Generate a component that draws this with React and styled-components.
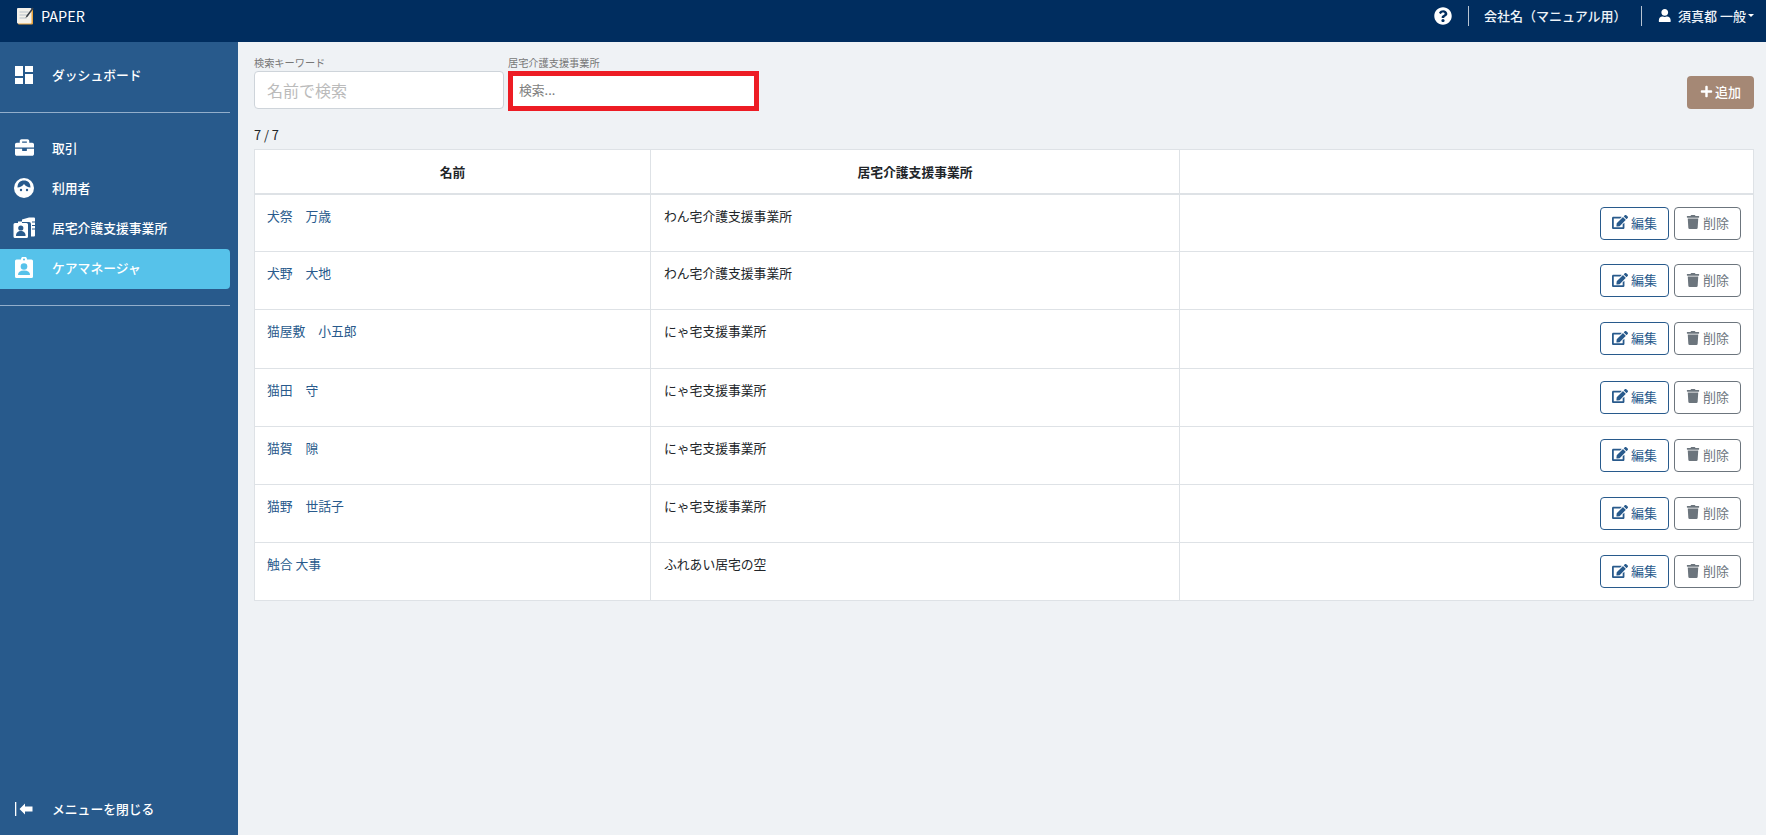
import React from 'react';
import styled, { createGlobalStyle } from 'styled-components';
import { FaBriefcase, FaQuestionCircle, FaUser, FaPlus, FaEdit, FaTrash } from 'react-icons/fa';
import { MdDashboard } from 'react-icons/md';

const Global = createGlobalStyle`
  html, body { margin: 0; padding: 0; height: 100%; background: #eff2f5; }
  #root { height: 100%; }
  * { box-sizing: border-box; }
  body { font-family: "Noto Sans CJK JP", "Noto Sans", sans-serif; color: #212529; }
`;
const Page = styled.div`display:flex;flex-direction:column;height:835px;overflow:hidden;`;
const Header = styled.header`height:42px;flex:none;background:#002d5f;color:#fff;display:flex;align-items:center;justify-content:space-between;padding:0 12px 11px 16px;`;
const Brand = styled.div`display:flex;align-items:center;gap:7px;font-size:14.4px;line-height:16px;`;
const HeaderRight = styled.div`display:flex;align-items:center;font-size:13px;font-weight:500;color:#eef3f8;`;
const HelpIcon = styled(FaQuestionCircle)`font-size:18px;color:#fff;margin-right:16px;`;
const Sep = styled.span`width:1px;height:20px;background:#b8c4d2;`;
const Company = styled.span`margin:0 14px 0 15px;`;
const UserIcon = styled(FaUser)`font-size:13.5px;margin:0 7px 0 16px;color:#fff;`;
const Caret = styled.span`margin-left:2px;border-top:3px solid #fff;border-left:3px solid transparent;border-right:3px solid transparent;`;
const Body = styled.div`flex:1;display:flex;min-height:0;`;
const Sidebar = styled.nav`width:238px;flex:none;background:#285a8c;display:flex;flex-direction:column;padding:14px 8px 5px 0;`;
const NavItem = styled.div`height:40px;flex:none;display:flex;align-items:center;padding:0 0 3px 12px;color:#fff;font-size:12.8px;font-weight:500;border-radius:0 4px 4px 0;background:${p => (p.$active ? '#56c2ea' : 'transparent')};`;
const IconBox = styled.span`width:24px;height:24px;font-size:19px;margin-right:16px;display:flex;align-items:center;justify-content:center;color:#fff;`;
const Rule = styled.div`height:1px;flex:none;background:#93aecb;margin:${p => p.$m};`;
const Spacer = styled.div`flex:1;`;
const Main = styled.main`flex:1;min-width:0;padding:14px 12px 0 16px;`;
const Filters = styled.div`display:flex;align-items:flex-start;height:55px;`;
const Field = styled.div`display:flex;flex-direction:column;margin-right:4px;`;
const Label = styled.label`font-size:10.2px;line-height:13px;height:15px;color:#777;`;
const NameInput = styled.div`width:250px;height:38px;background:#fff;border:1px solid #ced4da;border-radius:4px;padding:0 12px;display:flex;align-items:center;font-size:16px;color:#bbb;`;
const SelectInput = styled.div`width:251px;height:40px;background:#fff;border:5px solid #ed1c24;padding:0 6px 3px;display:flex;align-items:center;font-size:12.8px;color:#808080;`;
const AddButton = styled.button`margin:20px 0 0 auto;width:67px;height:33px;background:#a58875;color:#fff;border:0;border-radius:4px;font:500 13px "Noto Sans CJK JP",sans-serif;display:flex;align-items:center;justify-content:center;gap:2px;padding:0 0 2px;`;
const Count = styled.div`font-size:12.8px;line-height:16px;margin-top:16px;margin-bottom:6px;`;
const Table = styled.table`width:1500px;border-collapse:collapse;table-layout:fixed;background:#fff;font-size:12.8px;`;
const Th = styled.th`height:44px;border:1px solid #dee2e6;border-bottom:2px solid #dee2e6;font-weight:700;text-align:center;vertical-align:middle;`;
const Td = styled.td`height:58.2px;border:1px solid #dee2e6;padding:11px 12px 0 13px;vertical-align:top;line-height:19px;`;
const NameLink = styled.a`color:#285a8c;margin-left:-1px;`;
const Actions = styled.div`display:flex;justify-content:flex-end;gap:5px;margin-top:1px;`;
const RowButton = styled.button`height:33px;background:#fff;border-radius:4px;border:1px solid ${p => p.$c};color:${p => p.$c};font:400 13px "Noto Sans CJK JP",sans-serif;display:flex;align-items:center;justify-content:center;gap:3px;width:${p => p.$w}px;padding:0 0 2px;svg{font-size:${p => p.$icon}px;}`;

const Logo = () => (
  <svg width="18" height="18" viewBox="0 0 18 18">
    <rect x="2" y="2" width="15" height="15.5" rx="1" fill="#e8a33d" />
    <rect x="1" y="1" width="14.500" height="15.500" rx="1" fill="#f4f1ea" />
    <path d="M3.500 5h9M3.500 8h9M3.500 11h7" stroke="#b9c2c9" strokeWidth="1" />
    <path d="M16.500 0.500l-6 8-1 2.500 2.200-1.500 6-8z" fill="#3a3f45" />
  </svg>
);
const FaceIcon = () => (
  <svg width="20" height="20" viewBox="0 0 20 20">
    <circle cx="10" cy="10" r="10" fill="#fff" />
    <path d="M3.500 9.500C3.500 5 6 2.500 10 2.500s6.500 2.500 6.500 7C14 9.500 11.500 8 10 6 8.500 8 6 9.500 3.500 9.500z" fill="#285a8c" />
    <circle cx="7" cy="12" r="1.200" fill="#285a8c" />
    <circle cx="13" cy="12" r="1.200" fill="#285a8c" />
  </svg>
);
const OfficeIcon = () => (
  <svg width="23" height="21" viewBox="0 0 23 21">
    <path d="M9 2.500l7-2h5a1 1 0 0 1 1 1v17a1 1 0 0 1-1 1h-3V7a2 2 0 0 0-2-2H9z" fill="#fff" />
    <path d="M19 5h3M19 8.500h3M19 12h3" stroke="#285a8c" strokeWidth="1.200" />
    <path d="M2 6h3V4.500h4V6h4.500A1.500 1.500 0 0 1 15 7.500V19.500A1.500 1.500 0 0 1 13.500 21H2a1.500 1.500 0 0 1-1.500-1.500V7.500A1.500 1.500 0 0 1 2 6z" fill="#fff" />
    <circle cx="7.800" cy="11" r="2.600" fill="#285a8c" />
    <path d="M3 19c0-3.500 2-5 4.800-5s4.800 1.500 4.800 5z" fill="#285a8c" />
  </svg>
);
const BadgeIcon = () => (
  <svg width="18" height="21" viewBox="0 0 18 21">
    <path d="M1.500 2.500H6a3 3 0 0 1 6 0h4.500A1.500 1.500 0 0 1 18 4V19.500a1.500 1.500 0 0 1-1.500 1.500h-15A1.500 1.500 0 0 1 0 19.500V4A1.500 1.500 0 0 1 1.500 2.500z" fill="#fff" />
    <circle cx="9" cy="2.500" r="1" fill="#56c2ea" />
    <circle cx="9" cy="9.500" r="3.300" fill="#56c2ea" />
    <path d="M3 18c0-3 2-4.500 6-4.500s6 1.500 6 4.500z" fill="#56c2ea" />
  </svg>
);
const CloseIcon = () => (
  <svg width="18" height="14" viewBox="0 0 18 14">
    <rect x="0" y="0" width="1.300" height="14" fill="#fff" />
    <path d="M4.500 7l5.500-5.500v3h7.500v5H10v3z" fill="#fff" />
  </svg>
);

const rows = [
  ['犬祭　万歳', 'わん宅介護支援事業所'],
  ['犬野　大地', 'わん宅介護支援事業所'],
  ['猫屋敷　小五郎', 'にゃ宅支援事業所'],
  ['猫田　守', 'にゃ宅支援事業所'],
  ['猫賀　隙', 'にゃ宅支援事業所'],
  ['猫野　世話子', 'にゃ宅支援事業所'],
  ['触合 大事', 'ふれあい居宅の空'],
];

export default function App() {
  return (
    <Page>
      <Global />
      <Header>
        <Brand><Logo />PAPER</Brand>
        <HeaderRight>
          <HelpIcon />
          <Sep />
          <Company>会社名（マニュアル用）</Company>
          <Sep />
          <UserIcon />
          須真都 一般
          <Caret />
        </HeaderRight>
      </Header>
      <Body>
        <Sidebar>
          <NavItem><IconBox><MdDashboard size={24} /></IconBox>ダッシュボード</NavItem>
          <Rule $m="16px 0 16px" />
          <NavItem><IconBox><FaBriefcase /></IconBox>取引</NavItem>
          <NavItem><IconBox><FaceIcon /></IconBox>利用者</NavItem>
          <NavItem><IconBox><OfficeIcon /></IconBox>居宅介護支援事業所</NavItem>
          <NavItem $active><IconBox><BadgeIcon /></IconBox>ケアマネージャ</NavItem>
          <Rule $m="16px 0 0" />
          <Spacer />
          <NavItem><IconBox><CloseIcon /></IconBox>メニューを閉じる</NavItem>
        </Sidebar>
        <Main>
          <Filters>
            <Field>
              <Label>検索キーワード</Label>
              <NameInput>名前で検索</NameInput>
            </Field>
            <Field>
              <Label>居宅介護支援事業所</Label>
              <SelectInput>検索...</SelectInput>
            </Field>
            <AddButton><FaPlus size={13} />追加</AddButton>
          </Filters>
          <Count>7 / 7</Count>
          <Table>
            <colgroup><col width="396" /><col width="529" /><col /></colgroup>
            <thead>
              <tr><Th>名前</Th><Th>居宅介護支援事業所</Th><Th /></tr>
            </thead>
            <tbody>
              {rows.map(r => (
                <tr key={r[0]}>
                  <Td><NameLink>{r[0]}</NameLink></Td>
                  <Td>{r[1]}</Td>
                  <Td>
                    <Actions>
                      <RowButton $c="#285a8c" $w={69} $icon={16}><FaEdit />編集</RowButton>
                      <RowButton $c="#6c757d" $w={67} $icon={14}><FaTrash />削除</RowButton>
                    </Actions>
                  </Td>
                </tr>
              ))}
            </tbody>
          </Table>
        </Main>
      </Body>
    </Page>
  );
}
